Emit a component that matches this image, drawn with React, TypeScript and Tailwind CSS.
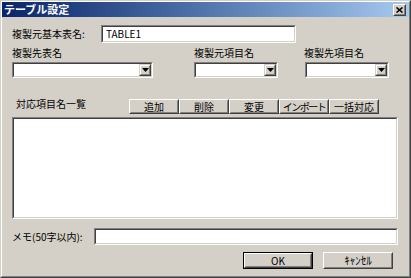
import React from "react";

// classic 3D borders
function Sunken({ className = "", children }: { className?: string; children?: React.ReactNode }) {
  return (
    <div className={`border border-t-[#808080] border-l-[#808080] border-b-white border-r-white ${className}`}>
      <div className="flex h-full w-full items-center border border-t-[#404040] border-l-[#404040] border-b-[#D4D0C8] border-r-[#D4D0C8] bg-white">
        {children}
      </div>
    </div>
  );
}

function Btn({
  className = "",
  label,
  isDefault = false,
}: {
  className?: string;
  label: string;
  isDefault?: boolean;
}) {
  const face = (
    <div className="h-full w-full border border-t-white border-l-white border-b-[#404040] border-r-[#404040]">
      <div className="flex h-full w-full items-center justify-center border border-t-[#D4D0C8] border-l-[#D4D0C8] border-b-[#808080] border-r-[#808080] bg-[#D4D0C8] leading-none">
        {label}
      </div>
    </div>
  );
  if (isDefault) return <div className={`border border-black ${className}`}>{face}</div>;
  return <div className={className}>{face}</div>;
}

function Combo({ className = "" }: { className?: string }) {
  return (
    <Sunken className={className}>
      <div className="ml-auto h-full w-[12px] border border-t-[#D4D0C8] border-l-[#D4D0C8] border-b-[#404040] border-r-[#404040]">
        <div className="flex h-full w-full items-center justify-center border border-t-white border-l-white border-b-[#808080] border-r-[#808080] bg-[#D4D0C8]">
          <svg width="7" height="4" viewBox="0 0 7 4">
            <path d="M0 0h7L3.5 4z" fill="#000" />
          </svg>
        </div>
      </div>
    </Sunken>
  );
}

export default function App() {
  return (
    <div className="h-[278px] w-[411px] border border-t-[#D4D0C8] border-l-[#D4D0C8] border-b-[#404040] border-r-[#404040] font-['Noto_Sans_CJK_JP',sans-serif] text-[10px] text-black">
      <div className="flex h-full w-full flex-col border border-t-white border-l-white border-b-[#808080] border-r-[#808080] bg-[#D4D0C8]">
        {/* title bar */}
        <div className="flex h-[15px] items-center bg-gradient-to-r from-[#0A246A] to-[#A6CAF0] pl-[2px] pr-[3px]">
          <span className="text-[11px] font-bold leading-none text-white">テーブル設定</span>
          <div className="ml-auto h-[12px] w-[13px] border border-t-white border-l-white border-b-[#404040] border-r-[#404040]">
            <div className="flex h-full w-full items-center justify-center border border-b-[#808080] border-r-[#808080] border-t-[#D4D0C8] border-l-[#D4D0C8] bg-[#D4D0C8]">
              <svg width="7" height="6" viewBox="0 0 7 6">
                <path d="M0.5 0.5l6 5M6.5 0.5l-6 5" stroke="#000" strokeWidth="1.6" />
              </svg>
            </div>
          </div>
        </div>

        <div className="flex flex-col pl-[10px]">
          {/* base table name */}
          <div className="mt-[8px] flex h-[18px] items-center">
            <span className="w-[89px] leading-none">複製元基本表名:</span>
            <Sunken className="h-[18px] w-[195px]">
              <span className="pl-[3px] leading-none">TABLE1</span>
            </Sunken>
          </div>

          {/* combo labels */}
          <div className="mt-[4px] flex h-[12px] items-center leading-none">
            <span className="w-[182px]">複製先表名</span>
            <span className="w-[110px]">複製元項目名</span>
            <span>複製先項目名</span>
          </div>

          <div className="mt-[3px] flex h-[16px]">
            <Combo className="h-[16px] w-[141px]" />
            <Combo className="ml-[41px] h-[16px] w-[84px]" />
            <Combo className="ml-[27px] h-[16px] w-[84px]" />
          </div>

          {/* list header + buttons */}
          <div className="mt-[21px] flex h-[15px]">
            <span className="ml-[4px] w-[113px] self-start leading-none">対応項目名一覧</span>
            <Btn className="h-[15px] w-[50px]" label="追加" />
            <Btn className="h-[15px] w-[50px]" label="削除" />
            <Btn className="h-[15px] w-[50px]" label="変更" />
            <Btn className="h-[15px] w-[50px] tracking-[-1.5px]" label="インポート" />
            <Btn className="h-[15px] w-[50px]" label="一括対応" />
          </div>

          <Sunken className="mt-[3px] h-[102px] w-[386px]" />

          {/* memo */}
          <div className="mt-[9px] flex h-[17px] items-center">
            <span className="w-[82px] leading-none">メモ(50字以内):</span>
            <Sunken className="h-[17px] w-[304px]" />
          </div>

          <div className="mt-[7px] flex h-[17px]">
            <Btn className="ml-[231px] h-[17px] w-[70px]" label="OK" isDefault />
            <Btn className="ml-[10px] h-[17px] w-[70px] text-[11px]" label="ｷｬﾝｾﾙ" />
          </div>
        </div>
      </div>
    </div>
  );
}
